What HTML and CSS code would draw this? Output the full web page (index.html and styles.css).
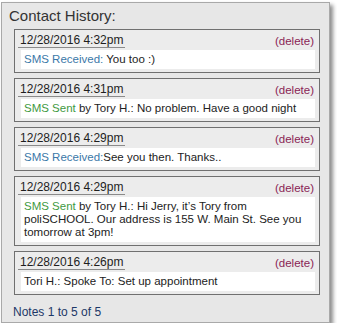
FILE: index.html
```html
<!DOCTYPE html>
<html>
<head>
<meta charset="utf-8">
<link rel="stylesheet" href="styles.css">
</head>
<body>
<div class="panel">
  <div class="title">Contact History:</div>
  <div class="list">
    <div class="card">
      <div class="head"><span class="date">12/28/2016 4:32pm</span><span class="del">(delete)</span></div>
      <div class="body"><span class="recv">SMS Received:</span> You too :)</div>
    </div>
    <div class="card">
      <div class="head"><span class="date">12/28/2016 4:31pm</span><span class="del">(delete)</span></div>
      <div class="body"><span class="sent">SMS Sent</span> by Tory H.: No problem. Have a good night</div>
    </div>
    <div class="card">
      <div class="head"><span class="date">12/28/2016 4:29pm</span><span class="del">(delete)</span></div>
      <div class="body"><span class="recv">SMS Received:</span>See you then. Thanks..</div>
    </div>
    <div class="card">
      <div class="head"><span class="date">12/28/2016 4:29pm</span><span class="del">(delete)</span></div>
      <div class="body"><span class="sent">SMS Sent</span> by Tory H.: Hi Jerry, it’s Tory from<br>poliSCHOOL. Our address is 155 W. Main St. See you<br>tomorrow at 3pm!</div>
    </div>
    <div class="card">
      <div class="head"><span class="date">12/28/2016 4:26pm</span><span class="del">(delete)</span></div>
      <div class="body">Tori H.: Spoke To: Set up appointment</div>
    </div>
  </div>
  <div class="footer">Notes 1 to 5 of 5</div>
</div>
</body>
</html>
```

FILE: styles.css
```css
html, body {
  margin: 0;
  padding: 0;
  background: #ffffff;
}
body {
  font-family: "Liberation Sans", Arial, sans-serif;
  padding: 2px 0 0 1px;
}
.panel {
  box-sizing: border-box;
  width: 329px;
  height: 321px;
  background: #e7e7e7;
  border: 1px solid #a9a9a9;
  box-shadow: 3px 3px 4px rgba(0, 0, 0, 0.45);
  padding: 0 9px 0 12px;
  display: flex;
  flex-direction: column;
}
.title {
  font-size: 15px;
  line-height: 18px;
  color: #333333;
  margin: 4px 0 4px -5px;
}
.list {
  display: flex;
  flex-direction: column;
  gap: 5px;
}
.card {
  border: 1px solid #707070;
  background: #ececec;
  padding: 4px 4px 3px 3px;
}
.head {
  display: flex;
  justify-content: space-between;
  align-items: flex-end;
  line-height: 13px;
  font-size: 12px;
}
.date {
  color: #1e1e1e;
  padding: 0 2px;
  border-bottom: 1px solid #8a8a8a;
}
.del {
  color: #8a1f55;
  font-size: 11.5px;
  padding-right: 1px;
}
.body {
  margin: 2px 0 0 3px;
  background: #ffffff;
  padding: 3px 3px;
  font-size: 11.5px;
  line-height: 13px;
  color: #222222;
}
.recv {
  color: #3b78a8;
}
.sent {
  color: #3f9a3f;
}
.footer {
  margin-top: 10px;
  font-size: 12px;
  line-height: 14px;
  color: #1d3868;
  margin-left: -1px;
}
```
